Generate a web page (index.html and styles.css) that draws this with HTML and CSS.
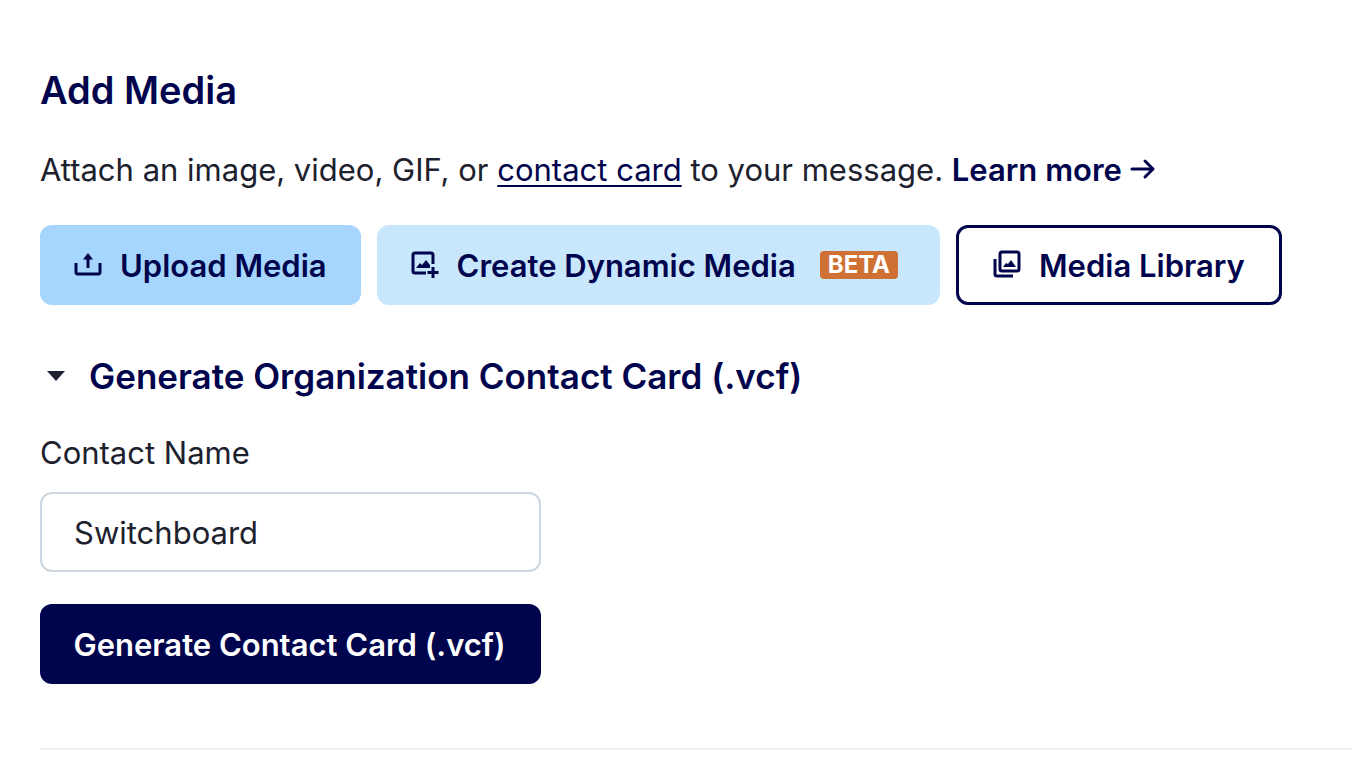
FILE: index.html
```html
<!DOCTYPE html>
<html lang="en">
<head>
  <meta charset="UTF-8" />
  <meta name="viewport" content="width=device-width, initial-scale=1.0" />
  <title>Add Media</title>
  <link rel="stylesheet" href="styles.css">
</head>
<body>
  <main class="media">
    <h2 class="media-title">Add Media</h2>
    <p class="media-intro">
      Attach an image, video, GIF, or <a class="card-link" href="#contact-card">contact card</a> to your message.
      <a class="learn-more" href="#learn-more">Learn more
        <svg class="arrow" viewBox="0 0 26 24" aria-hidden="true"><path d="M2 12H23M15 4l8 8-8 8" /></svg></a>
    </p>

    <div class="actions">
      <button type="button" class="btn btn-upload">
        <svg class="icon" viewBox="0 1 32 32" aria-hidden="true">
          <path class="line" d="M4 14v9q0 2 2 2h20q2 0 2-2v-9M16 19V9" />
          <path d="M16 4l5 6.500H11z" />
        </svg>
        Upload Media
      </button>
      <button type="button" class="btn btn-dynamic">
        <svg class="icon" viewBox="0 1 32 32" aria-hidden="true">
          <path class="line" d="M24 15V6q0-2-2-2H6q-2 0-2 2v16q0 2 2 2h11M24 18v11M18.500 23.500h11" />
          <path d="M7 19l4-5 2 2 4-5 4 5v3z" />
        </svg>
        Create Dynamic Media
        <span class="badge">BETA</span>
      </button>
      <button type="button" class="btn btn-library">
        <svg class="icon" viewBox="0 1 32 32" aria-hidden="true">
          <rect class="line" x="9" y="3" width="19" height="19" rx="2" />
          <path class="line" d="M4 10v15q0 2 2 2h16" />
          <path d="M12 18l3-4 2 1 3-4 5 7z" />
        </svg>
        Media Library
      </button>
    </div>

    <details class="contact" id="contact-card" open>
      <summary class="contact-title">Generate Organization Contact Card (.vcf)</summary>
      <form class="contact-form">
        <label for="contactName">Contact Name</label>
        <input type="text" id="contactName" value="Switchboard">
        <button type="button" class="btn btn-generate">Generate Contact Card (.vcf)</button>
      </form>
    </details>
    <hr class="divider">
  </main>
</body>
</html>
```
FILE: styles.css
```css
:root {
  --navy: #00044c;
  --text: #1c212d;
  --font-family: Inter, "Liberation Sans", sans-serif;
}

* {
  box-sizing: border-box;
}

body {
  margin: 0;
  background: #fff;
  color: var(--text);
  font-family: var(--font-family);
  font-size: 31px;
  line-height: 48px;
}

.media {
  padding: 66px 0 22px 40px;
}

.media-title {
  margin: 0 0 32px;
  color: var(--navy);
  font-size: 38px;
  font-weight: 600;
}

.media-intro {
  margin: 0 0 31px;
}

.card-link {
  color: var(--navy);
  text-decoration-thickness: 2px;
  text-underline-offset: 4px;
}

.learn-more {
  color: var(--navy);
  font-weight: 600;
  text-decoration: none;
}

.arrow {
  width: 26px;
  height: 24px;
  fill: none;
  stroke: currentColor;
  stroke-width: 3;
  stroke-linecap: round;
  stroke-linejoin: round;
}

.actions {
  display: flex;
  flex-wrap: wrap;
  gap: 16px;
}

.btn {
  display: flex;
  align-items: center;
  justify-content: center;
  gap: 16px;
  min-height: 80px;
  padding: 2px 34px 0 32px;
  border: none;
  border-radius: 12px;
  color: var(--navy);
  font: inherit;
  font-weight: 600;
  white-space: nowrap;
  cursor: pointer;
}

.btn-upload {
  background: #a6d6fd;
}

.btn-dynamic {
  padding-right: 42px;
  background: #c8e6fc;
}

.btn-library {
  border: 3px solid var(--navy);
  background: #fff;
}

.icon {
  width: 32px;
  height: 32px;
  fill: currentColor;
}

.icon .line {
  fill: none;
  stroke: currentColor;
  stroke-width: 3;
}

.badge {
  margin: 0 0 2px 8px;
  padding: 0 8px;
  border-radius: 4px;
  background: #cf7034;
  color: #fff;
  font-size: 24px;
  font-weight: 700;
  line-height: 28px;
}

.contact {
  margin-top: 47px;
}

.contact-title {
  display: flex;
  align-items: center;
  gap: 24px;
  padding-left: 7px;
  color: var(--navy);
  font-size: 35px;
  font-weight: 600;
  list-style: none;
  cursor: pointer;
}

.contact-title::before {
  content: "";
  width: 18px;
  height: 10px;
  background: var(--text);
  clip-path: polygon(0 0, 100% 0, 50% 100%);
}

.contact-form {
  display: grid;
  max-width: 501px;
  margin-top: 29px;
}

.contact-form input {
  width: 100%;
  min-width: 0;
  height: 80px;
  margin: 15px 0 32px;
  padding: 0 32px;
  border: 2px solid #ccd5e0;
  border-radius: 12px;
  background: #fff;
  color: var(--text);
  font: inherit;
}

.btn-generate {
  background: var(--navy);
  color: #fff;
}

.divider {
  margin: 64px 0 0;
  border: none;
  border-top: 2px solid #edf2f7;
}
```
